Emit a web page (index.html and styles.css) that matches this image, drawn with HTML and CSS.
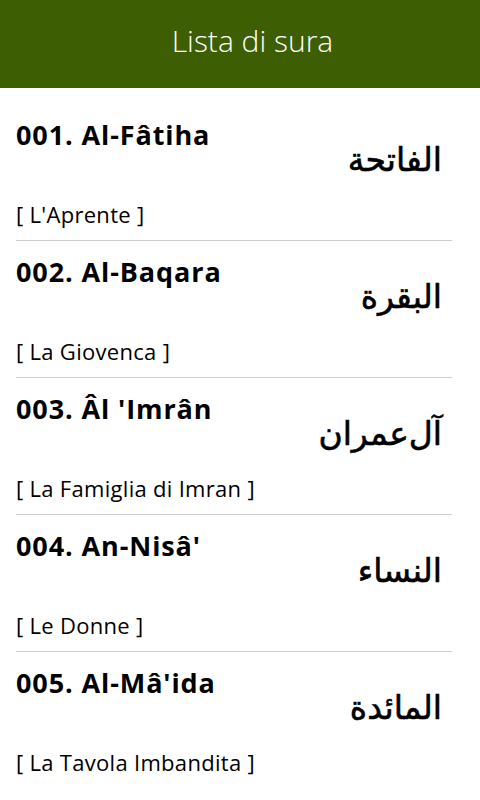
FILE: index.html
```html
<!doctype html>
<html lang="it">

<head>
    <meta charset="utf-8">
    <meta name="viewport" content="width=device-width, initial-scale=1">
    <title>Lista di sura</title>
    <link rel="stylesheet" href="styles.css">
</head>

<body>
    <header class="app-bar">
        <h1>Lista di sura</h1>
    </header>

    <ul class="sura-list">
        <li class="sura">
            <div class="sura-head">
                <span class="sura-name">001. Al-Fâtiha</span>
                <span class="sura-arabic" lang="ar" dir="rtl">الفاتحة</span>
            </div>
            <div class="sura-meaning">[ L'Aprente ]</div>
        </li>
        <li class="sura">
            <div class="sura-head">
                <span class="sura-name">002. Al-Baqara</span>
                <span class="sura-arabic" lang="ar" dir="rtl">البقرة</span>
            </div>
            <div class="sura-meaning">[ La Giovenca ]</div>
        </li>
        <li class="sura">
            <div class="sura-head">
                <span class="sura-name">003. Âl 'Imrân</span>
                <span class="sura-arabic" lang="ar" dir="rtl">آل‌عمران</span>
            </div>
            <div class="sura-meaning">[ La Famiglia di Imran ]</div>
        </li>
        <li class="sura">
            <div class="sura-head">
                <span class="sura-name">004. An-Nisâ'</span>
                <span class="sura-arabic" lang="ar" dir="rtl">النساء</span>
            </div>
            <div class="sura-meaning">[ Le Donne ]</div>
        </li>
        <li class="sura">
            <div class="sura-head">
                <span class="sura-name">005. Al-Mâ'ida</span>
                <span class="sura-arabic" lang="ar" dir="rtl">المائدة</span>
            </div>
            <div class="sura-meaning">[ La Tavola Imbandita ]</div>
        </li>
    </ul>
</body>

</html>
```

FILE: styles.css
```css
body {
    margin: 0;
    font-family: "Open Sans", "Noto Sans", sans-serif;
    background: #fff;
    color: #000;
}

.app-bar {
    height: 88px;
    background: #3d5e02;
    display: flex;
    align-items: center;
    justify-content: center;
}

.app-bar h1 {
    margin: 0 0 8px 25px;
    font-size: 30px;
    font-weight: 300;
    color: #fff;
}

.sura-list {
    list-style: none;
    margin: 0;
    padding: 16px 28px 0 16px;
}

.sura {
    height: 136px;
}

.sura + .sura {
    border-top: 1px solid #cccccc;
}

.sura-head {
    display: flex;
    justify-content: space-between;
    align-items: flex-start;
    padding-top: 11px;
}

.sura-name {
    font-size: 27px;
    font-weight: 700;
    line-height: 40px;
    letter-spacing: 0.9px;
}

.sura-arabic {
    margin: 26px 10px 0 0;
    font-family: "DejaVu Sans", sans-serif;
    font-size: 33px;
    font-weight: 400;
    line-height: 38px;
    -webkit-text-stroke: 0.6px #000;
}

.sura-meaning {
    margin-top: 20px;
    font-size: 22px;
    line-height: 30px;
    letter-spacing: 0.3px;
}
```
